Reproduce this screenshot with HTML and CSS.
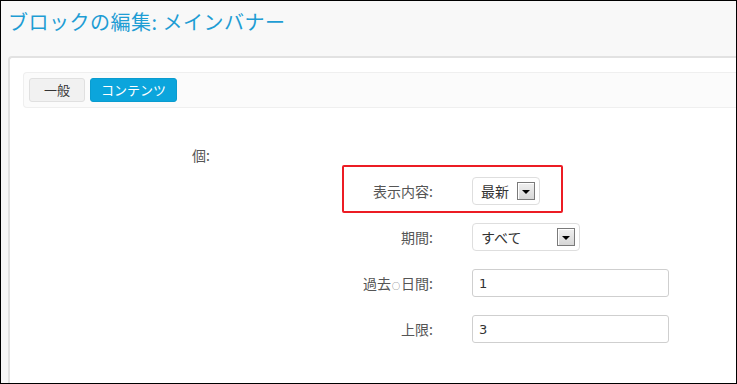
FILE: index.html
```html
<!DOCTYPE html>
<html lang="ja">
<head>
    <meta charset="UTF-8">
    <title>ブロックの編集</title>
    <link rel="stylesheet" href="styles.css">
</head>
<body>
    <div class="frame">
        <!-- Header -->
        <h1 class="page-title">ブロックの編集: メインバナー</h1>

        <!-- Panel -->
        <div class="panel">
            <div class="tabs">
                <span class="tab">一般</span>
                <span class="tab active">コンテンツ</span>
            </div>

            <div class="form">
                <div class="group-label">個:</div>

                <div class="row">
                    <label>表示内容:</label>
                    <div class="select small">
                        <span>最新</span>
                        <span class="arrow"></span>
                    </div>
                </div>
                <div class="row">
                    <label>期間:</label>
                    <div class="select wide">
                        <span>すべて</span>
                        <span class="arrow"></span>
                    </div>
                </div>
                <div class="row">
                    <label>過去<span class="dot">○</span>日間:</label>
                    <input class="text-input" type="text" value="1">
                </div>
                <div class="row">
                    <label>上限:</label>
                    <input class="text-input" type="text" value="3">
                </div>

                <!-- annotation -->
                <div class="callout"></div>
            </div>
        </div>
    </div>
</body>
</html>
```

FILE: styles.css
```css
* {
    margin: 0;
    padding: 0;
    box-sizing: border-box;
}

body {
    font-family: "DejaVu Sans", "Noto Sans CJK JP", sans-serif;
    background: #fff;
}

.frame {
    width: 737px;
    height: 384px;
    border: 1px solid #000;
    background: #f8f8f8;
    overflow: hidden;
    display: flex;
    flex-direction: column;
}

/* Header */
.page-title {
    height: 55px;
    padding: 8px 0 0 7px;
    font-family: "Noto Sans CJK JP", sans-serif;
    font-weight: normal;
    font-size: 20px;
    line-height: 26px;
    color: #1e9dd4;
    letter-spacing: 0.5px;
}

/* Panel */
.panel {
    flex: 1;
    margin-left: 7px;
    background: #fff;
    border: 2px solid #e2e2e2;
    border-right: none;
    border-bottom: none;
    border-radius: 4px 0 0 0;
    padding: 14px 0 0 13px;
}

.tabs {
    display: flex;
    gap: 5px;
    padding: 5px;
    background: #fbfbfb;
    border: 1px solid #efefef;
    border-right: none;
    border-radius: 4px 0 0 4px;
}

.tab {
    height: 24px;
    line-height: 22px;
    padding: 0 13px;
    font-family: "Noto Sans CJK JP", sans-serif;
    font-size: 13px;
    color: #333;
    background: #f1f1f1;
    border: 1px solid #e0e0e0;
    border-radius: 3px;
}

.tab:first-child {
    width: 56px;
    text-align: center;
    padding: 0;
}

.tab.active {
    width: 87px;
    text-align: center;
    padding: 0;
    background: #0ba5dc;
    border-color: #0a9ccf;
    color: #fff;
}

/* Form */
.form {
    position: relative;
    margin: 37px 0 0 169px;
}

.group-label {
    height: 20px;
    line-height: 20px;
    font-size: 14px;
    color: #555;
    font-family: "Noto Sans CJK JP", sans-serif;
    margin-bottom: 12px;
}

.row {
    display: grid;
    grid-template-columns: 243px auto;
    column-gap: 37px;
    align-items: center;
    height: 28px;
    margin-bottom: 18px;
}

.row label {
    text-align: right;
    font-family: "Noto Sans CJK JP", sans-serif;
    font-size: 14px;
    color: #555;
    padding-right: 2px;
}

.row .dot {
    font-size: 8px;
    color: #555;
    margin: 0 1px;
}

.select {
    display: flex;
    align-items: center;
    justify-content: space-between;
    height: 28px;
    padding: 0 4px 0 8px;
    border: 1px solid #dedede;
    border-radius: 4px;
    background: #fff;
    font-family: "Noto Sans CJK JP", sans-serif;
    font-size: 14px;
    color: #333;
}

.select.small {
    width: 68px;
}

.select.wide {
    width: 108px;
}

.arrow {
    position: relative;
    width: 18px;
    height: 18px;
    border: 1px solid #7a7a7a;
    background: linear-gradient(#f0f0f0, #d6d6d6);
    box-shadow: inset 1px 1px 0 #fff;
}

.arrow::after {
    content: "";
    position: absolute;
    left: 4px;
    top: 7px;
    border-left: 4px solid transparent;
    border-right: 4px solid transparent;
    border-top: 4px solid #000;
}

.text-input {
    width: 197px;
    height: 28px;
    padding-left: 6px;
    border: 1px solid #cfcfcf;
    border-radius: 3px;
    font-family: "DejaVu Sans", sans-serif;
    font-size: 13px;
    color: #333;
    outline: none;
}

.callout {
    position: absolute;
    left: 150px;
    top: 20px;
    width: 221px;
    height: 48px;
    border: 2px solid #ec1c24;
    border-radius: 2px;
}
```
